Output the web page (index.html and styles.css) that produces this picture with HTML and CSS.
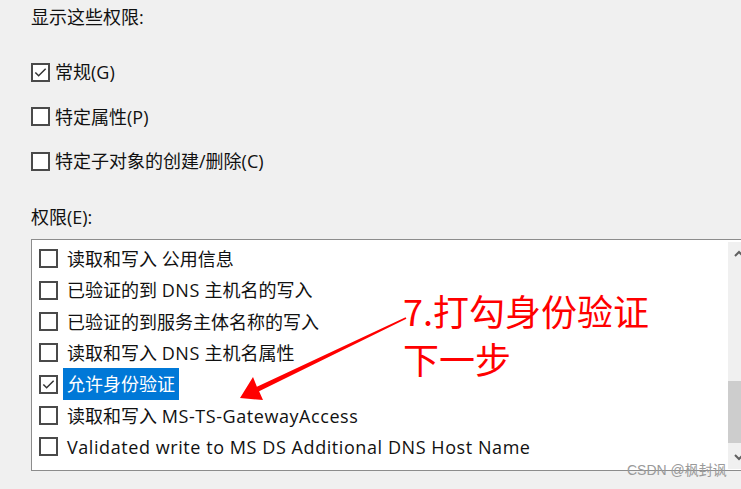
FILE: index.html
```html
<!DOCTYPE html>
<html lang="zh-CN">
<head>
<meta charset="utf-8">
<title>权限</title>
<link rel="stylesheet" href="styles.css">
</head>
<body>
<div class="page">
  <div class="title">显示这些权限:</div>
  <div class="options">
    <div class="opt"><span class="cb checked"><svg viewBox="0 0 16 16"><polyline points="2.5,8 6,11.5 13.5,4"/></svg></span><span>常规(G)</span></div>
    <div class="opt"><span class="cb"></span><span>特定属性(P)</span></div>
    <div class="opt"><span class="cb"></span><span>特定子对象的创建/删除(C)</span></div>
  </div>
  <div class="title perm">权限(E):</div>
  <div class="list">
    <div class="rows">
      <div class="row"><span class="cb"></span><span class="lbl">读取和写入 公用信息</span></div>
      <div class="row"><span class="cb"></span><span class="lbl">已验证的到 <span class="lat">DNS</span> 主机名的写入</span></div>
      <div class="row"><span class="cb"></span><span class="lbl">已验证的到服务主体名称的写入</span></div>
      <div class="row"><span class="cb"></span><span class="lbl">读取和写入 <span class="lat">DNS</span> 主机名属性</span></div>
      <div class="row"><span class="cb checked"><svg viewBox="0 0 16 16"><polyline points="2.5,8 6,11.5 13.5,4"/></svg></span><span class="lbl sel">允许身份验证</span></div>
      <div class="row"><span class="cb"></span><span class="lbl">读取和写入 <span class="lat">MS-TS-GatewayAccess</span></span></div>
      <div class="row"><span class="cb"></span><span class="lbl lat">Validated write to MS DS Additional DNS Host Name</span></div>
    </div>
    <div class="scrollbar">
      <div class="sb-btn"><svg viewBox="0 0 22 16"><polyline points="7,10 11,6 15,10"/></svg></div>
      <div class="sb-track"><div class="sb-thumb"></div></div>
      <div class="sb-btn"><svg viewBox="0 0 22 16"><polyline points="7,6 11,10 15,6"/></svg></div>
    </div>
  </div>
</div>
<svg class="arrow" width="741" height="489" viewBox="0 0 741 489">
  <polygon points="240,398 253,377 256.9,386.7 405.6,317.2 406.4,318.8 259.1,391.3 263,400" fill="#ff0000"/>
</svg>
<div class="note">7.打勾身份验证<br>下一步</div>
<div class="wm">CSDN @枫封讽</div>
</body>
</html>
```

FILE: styles.css
```css
html, body {
  margin: 0;
  padding: 0;
}
body {
  background: #f0f0f0;
  width: 741px;
  height: 489px;
  overflow: hidden;
  position: relative;
  font-family: "Open Sans", "Noto Sans CJK SC", sans-serif;
  font-size: 18px;
  color: #111;
}
.page {
  padding: 5px 0 0 31px;
}
.title {
  line-height: 24px;
  height: 24px;
}
.options {
  margin-top: 31px;
  display: flex;
  flex-direction: column;
  gap: 20.5px;
}
.opt {
  display: flex;
  align-items: center;
  height: 24px;
  line-height: 24px;
}
.cb {
  width: 19px;
  height: 19px;
  box-sizing: border-box;
  border: 2px solid #4a4a4a;
  background: #fff;
  flex: none;
  display: flex;
  align-items: center;
  justify-content: center;
}
.opt .cb {
  margin-right: 5px;
}
.cb svg {
  width: 15px;
  height: 15px;
}
.cb polyline {
  fill: none;
  stroke: #333;
  stroke-width: 1.6;
}
.perm {
  margin-top: 32px;
}
.list {
  margin-top: 10px;
  width: 720px;
  height: 232px;
  box-sizing: border-box;
  border: 1px solid #8c8c8c;
  background: #fff;
  display: flex;
}
.rows {
  flex: 1;
  padding-top: 3.3px;
}
.row {
  height: 31.33px;
  display: flex;
  align-items: center;
  padding-left: 7px;
}
.row .cb {
  margin-right: 5px;
}
.lbl {
  padding: 0 4px;
  line-height: 32px;
  white-space: nowrap;
}
.lat {
  letter-spacing: 0.57px;
}
.lbl.sel {
  background: #0078d7;
  color: #fff;
}
.scrollbar {
  width: 22px;
  margin: 2px 0 1px;
  background: #f0f0f0;
  display: flex;
  flex-direction: column;
}
.sb-btn {
  height: 24px;
  display: flex;
  align-items: center;
  justify-content: center;
}
.sb-btn svg {
  width: 22px;
  height: 16px;
}
.sb-btn polyline {
  fill: none;
  stroke: #606060;
  stroke-width: 2;
}
.sb-track {
  flex: 1;
  padding-top: 115px;
}
.sb-thumb {
  height: 62px;
  background: #cdcdcd;
}
.arrow {
  position: absolute;
  left: 0;
  top: 0;
  pointer-events: none;
}
.note {
  position: absolute;
  left: 403px;
  top: 286px;
  font-family: "Noto Sans CJK SC", sans-serif;
  font-size: 36px;
  line-height: 48px;
  color: #ff0000;
  white-space: nowrap;
}
.wm {
  position: absolute;
  left: 627px;
  top: 461px;
  font-family: "Liberation Sans", "Noto Sans CJK SC", sans-serif;
  font-size: 14px;
  line-height: 18px;
  color: #9a9a9a;
}
```
